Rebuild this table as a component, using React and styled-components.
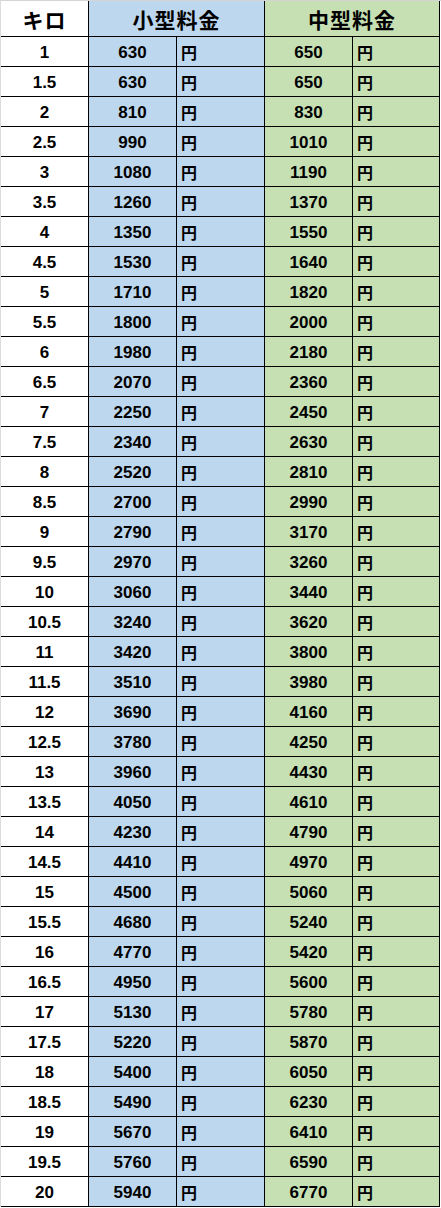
import React from "react";
import styled, { createGlobalStyle } from "styled-components";

const rates = [
  ["1", 630, 650],
  ["1.5", 630, 650],
  ["2", 810, 830],
  ["2.5", 990, 1010],
  ["3", 1080, 1190],
  ["3.5", 1260, 1370],
  ["4", 1350, 1550],
  ["4.5", 1530, 1640],
  ["5", 1710, 1820],
  ["5.5", 1800, 2000],
  ["6", 1980, 2180],
  ["6.5", 2070, 2360],
  ["7", 2250, 2450],
  ["7.5", 2340, 2630],
  ["8", 2520, 2810],
  ["8.5", 2700, 2990],
  ["9", 2790, 3170],
  ["9.5", 2970, 3260],
  ["10", 3060, 3440],
  ["10.5", 3240, 3620],
  ["11", 3420, 3800],
  ["11.5", 3510, 3980],
  ["12", 3690, 4160],
  ["12.5", 3780, 4250],
  ["13", 3960, 4430],
  ["13.5", 4050, 4610],
  ["14", 4230, 4790],
  ["14.5", 4410, 4970],
  ["15", 4500, 5060],
  ["15.5", 4680, 5240],
  ["16", 4770, 5420],
  ["16.5", 4950, 5600],
  ["17", 5130, 5780],
  ["17.5", 5220, 5870],
  ["18", 5400, 6050],
  ["18.5", 5490, 6230],
  ["19", 5670, 6410],
  ["19.5", 5760, 6590],
  ["20", 5940, 6770],
];

const fills = {
  white: "#ffffff",
  small: "#bdd7ee",
  medium: "#c6e0b4",
};

function App() {
  return (
    <>
      <GlobalStyle />
      <Sheet>
        <Grid>
          <HeadCell $fill="white">キロ</HeadCell>
          <HeadCell $fill="small" $span={2}>
            小型料金
          </HeadCell>
          <HeadCell $fill="medium" $span={2}>
            中型料金
          </HeadCell>

          {rates.map(([kilo, small, medium]) => (
            <React.Fragment key={kilo}>
              <NumCell $fill="white">{kilo}</NumCell>
              <NumCell $fill="small">{small}</NumCell>
              <YenCell $fill="small">円</YenCell>
              <NumCell $fill="medium">{medium}</NumCell>
              <YenCell $fill="medium">円</YenCell>
            </React.Fragment>
          ))}
        </Grid>
      </Sheet>
    </>
  );
}

const GlobalStyle = createGlobalStyle`
  body {
    margin: 0;
    background: #ffffff;
  }
`;

const Sheet = styled.div`
  width: 441px;
  border-top: 1px solid #d4d4d4;
  border-left: 1px solid #dcdcdc;
  box-sizing: border-box;
`;

const Grid = styled.div`
  display: grid;
  grid-template-columns: 88px 88px 88px 88px 87px;
  grid-template-rows: 36px;
  grid-auto-rows: 30px;
`;

const Cell = styled.div`
  box-sizing: border-box;
  display: flex;
  align-items: center;
  border-right: 1px solid #000;
  border-bottom: 1px solid #000;
  background: ${(p) => fills[p.$fill]};
  color: #000;
  white-space: nowrap;
`;

const HeadCell = styled(Cell)`
  grid-column: span ${(p) => p.$span || 1};
  justify-content: center;
  font-family: "Noto Sans CJK JP", sans-serif;
  font-weight: 700;
  font-size: 21px;
  letter-spacing: 1px;
`;

const NumCell = styled(Cell)`
  justify-content: center;
  padding-top: 2px;
  font-family: "Liberation Sans", Arial, sans-serif;
  font-weight: 700;
  font-size: 17px;
`;

const YenCell = styled(Cell)`
  justify-content: flex-start;
  padding-left: 4px;
  font-family: "Noto Sans CJK JP", sans-serif;
  font-weight: 700;
  font-size: 16px;
`;

export default App;
